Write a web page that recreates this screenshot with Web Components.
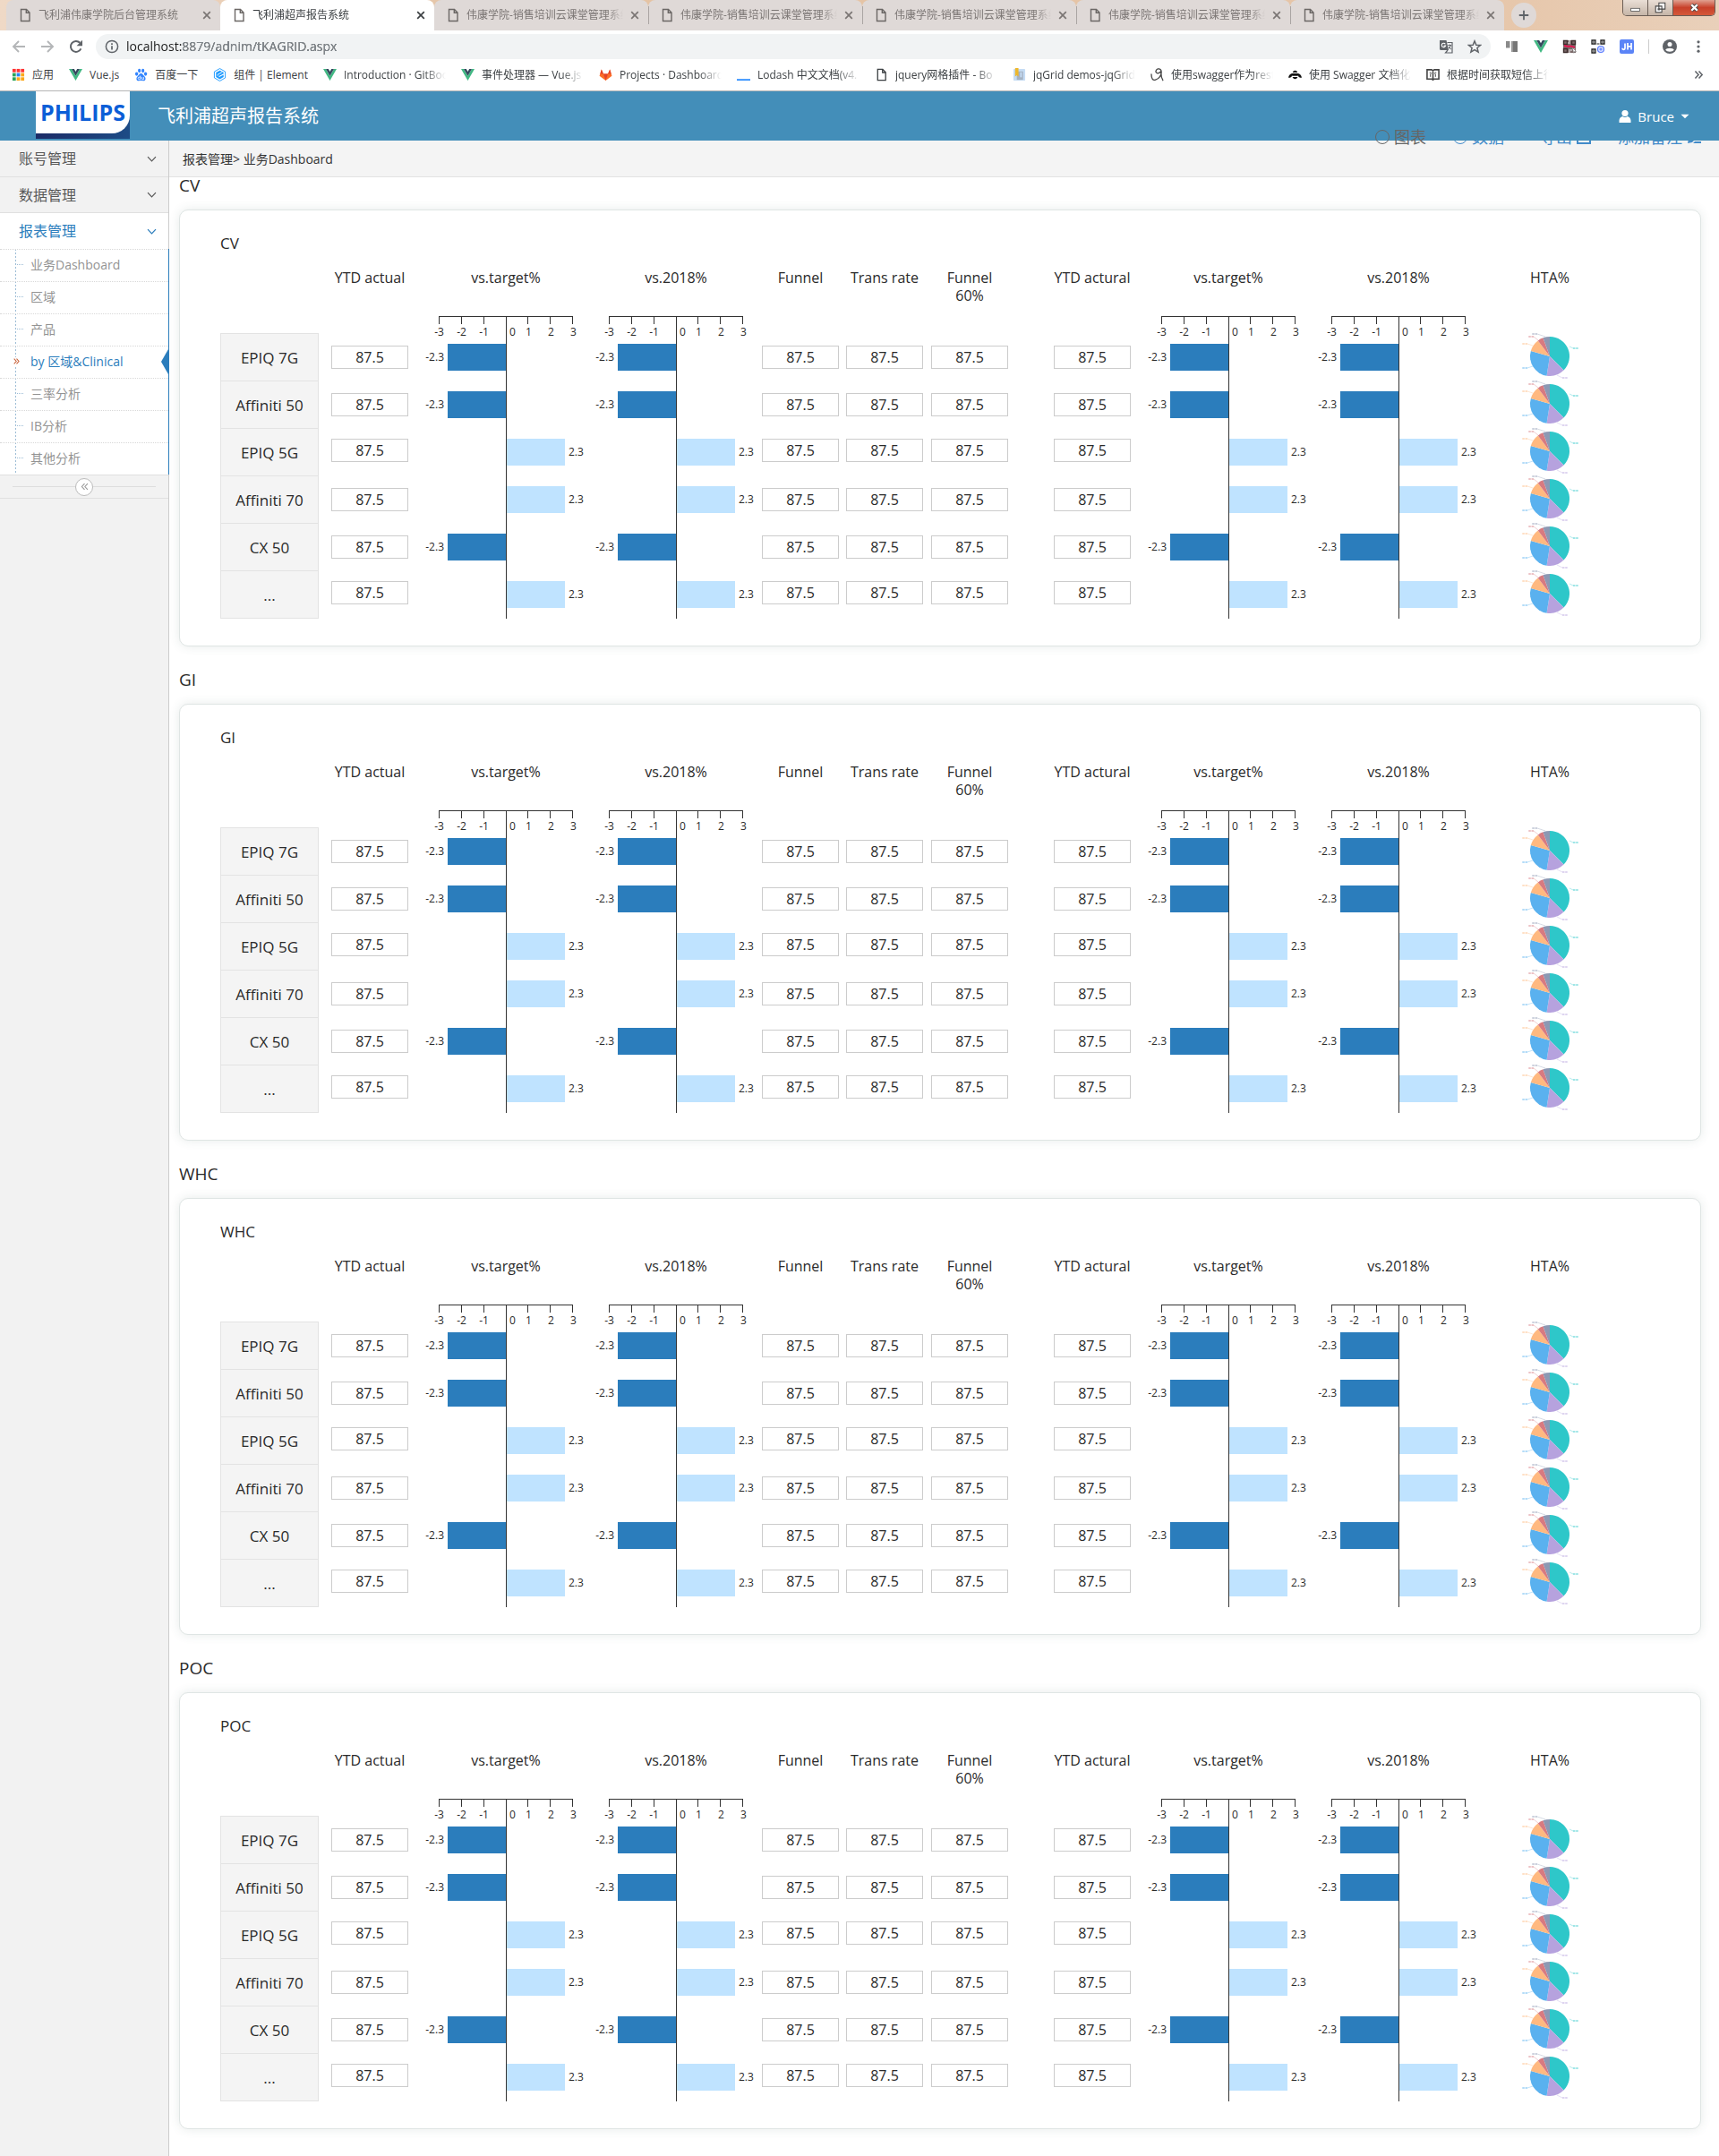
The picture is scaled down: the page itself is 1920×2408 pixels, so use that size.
<!DOCTYPE html>
<html lang="zh-CN">
<head>
<meta charset="utf-8">
<title>飞利浦超声报告系统</title>
<style>
html,body{margin:0;min-height:100%}
body{font-family:"Open Sans","Noto Sans CJK SC",sans-serif;color:#2a2a2a;background:#fff;min-height:100vh;display:flex;flex-direction:column}
app-shell{flex:1}
</style>
</head>
<body>
<browser-chrome></browser-chrome>
<app-header></app-header>
<app-shell>
  <side-menu slot="side"></side-menu>
  <page-toolbar slot="main"></page-toolbar>
  <product-panel slot="main" name="CV"></product-panel>
  <product-panel slot="main" name="GI"></product-panel>
  <product-panel slot="main" name="WHC"></product-panel>
  <product-panel slot="main" name="POC"></product-panel>
</app-shell>
<script>
const define = (tag, render) => customElements.define(tag, class extends HTMLElement {
  connectedCallback() {
    if (this.shadowRoot) return;
    const t = document.createElement('template');
    t.innerHTML = render(this);
    this.attachShadow({mode: 'open'}).append(t.content.cloneNode(true));
  }
});

/* ---------- icons ---------- */
const vue = '<path d="M0 1h3.2L8 9.4 12.8 1H16L8 15z" fill="#41b883"/><path d="M3.2 1h3L8 4.2 9.8 1h3L8 9.4z" fill="#35495e"/>';
const finder = (x, y) => `<path d="M${x} ${y}h4v4h-4z" fill="none" stroke="#222" stroke-width="1.3"/><path d="M${x+1.3} ${y+1.3}h1.4v1.4h-1.4z" fill="#222"/>`;
const ICONS = {
  page: '<path d="M3.5 1.5h6l3.5 3.5v9.5h-9.5z M9.3 1.7v3.6h3.5" fill="none" stroke="currentColor" stroke-width="1.4"/>',
  close: '<path d="M4.2 4.2l7.6 7.6M11.8 4.2l-7.6 7.6" fill="none" stroke="currentColor" stroke-width="1.7"/>',
  plus: '<path d="M8 1v14M1 8h14" fill="none" stroke="#5f6368" stroke-width="2.4"/>',
  back: '<path d="M15 8H2.5M8 2L2 8l6 6" fill="none" stroke="currentColor" stroke-width="1.9"/>',
  forward: '<path d="M1 8h12.500M8 2l6 6-6 6" fill="none" stroke="currentColor" stroke-width="1.9"/>',
  reload: '<path d="M13.4 10.400A6 6 0 1 1 12.300 3.800" fill="none" stroke="currentColor" stroke-width="2"/><path d="M15 .8v6.400H8.600z" fill="currentColor"/>',
  info: '<circle cx="8" cy="8" r="6.600" fill="none" stroke="#5f6368" stroke-width="1.500"/><path d="M8 7.200v4.200M8 4.300v1.600" stroke="#5f6368" stroke-width="1.700"/>',
  translate: '<path d="M1 1h7.500l2.500 11H2.500A1.500 1.500 0 0 1 1 10.500z" fill="#5f6368"/><path d="M9.500 3.500H15v11.500H7.500l2.500-3" fill="none" stroke="#5f6368" stroke-width="1.200"/><path d="M7.300 5.200A2.200 2.200 0 1 0 7.600 7H5.500" fill="none" stroke="#fff" stroke-width="1.100"/><path d="M10.300 6.500H14M12.200 5.500v1M13.300 6.700c-.4 2-1.400 3-2.600 4M11 8c.6 1.400 1.600 2.400 3 3" fill="none" stroke="#5f6368"/>',
  star: '<path d="M8 1.800l1.800 4.400 4.700.3-3.600 3 1.200 4.600L8 11.600l-4.100 2.500 1.200-4.600-3.600-3 4.700-.3z" fill="none" stroke="#5f6368" stroke-width="1.500"/>',
  panes: '<path d="M1 2h4.500v7.500H1z" fill="#8a8a8a"/><path d="M7 2h7v12H7z" fill="#777"/><path d="M7 2h2v12H7z" fill="#999"/>',
  vue,
  scan: '<path d="M1 1h14v14H1z" fill="#7d6a6a"/><path d="M1.500 1.500h4v4h-4zM10.500 1.500h4v4h-4zM1.500 10.500h4v4h-4z" fill="none" stroke="#3c2c2c" stroke-width="1.400"/><path d="M7 2h2M6 4h3M7 12h4M7 14h2M12 11h2" stroke="#eee"/><path d="M2 7l5 1 2-.6 5 1.400" fill="none" stroke="#e6124f" stroke-width="1.800"/><path d="M11 9l4.500 4.500-2 .1-.7 1.700z" fill="#fff" stroke="#777" stroke-width=".6"/>',
  qr: finder(1,1) + finder(11,1) + finder(1,11) + '<circle cx="11" cy="11" r="3.500" fill="#dbe2ff" stroke="#5b7cff" stroke-width="1.200"/><path d="M9.300 11h3.400M11 9.300v3.400" stroke="#5b7cff"/><path d="M6.500 5h3" stroke="#222"/>',
  jh: '<rect width="16" height="16" rx="2" fill="#5b84f7"/><path d="M6 4.500v5.300a1.500 1.500 0 0 1-3 0M9 4v7.500M13 4v7.500M9 7.800h4" fill="none" stroke="#fff" stroke-width="1.700"/>',
  avatar: '<circle cx="8" cy="8" r="8" fill="#5f6368"/><circle cx="8" cy="5.600" r="2.500" fill="#fff"/><path d="M3.200 11.800C4 8.900 12 8.900 12.800 11.800 11 14.300 5 14.300 3.200 11.800z" fill="#fff"/>',
  dots: '<circle cx="8" cy="2.800" r="1.600" fill="#5f6368"/><circle cx="8" cy="8" r="1.600" fill="#5f6368"/><circle cx="8" cy="13.200" r="1.600" fill="#5f6368"/>',
  apps: ['#f33','#f33','#f33','#2aa45a','#2a84f0','#fba81a','#2aa45a','#fba81a','#fba81a'].map((c,i)=>`<rect x="${1+(i%3)*5}" y="${1+Math.floor(i/3)*5}" width="4" height="4" fill="${c}"/>`).join(''),
  baidu: '<g fill="#3385ff"><ellipse cx="2.800" cy="7" rx="1.800" ry="2.300"/><ellipse cx="6" cy="3.200" rx="1.700" ry="2.300"/><ellipse cx="10.300" cy="3.200" rx="1.700" ry="2.300"/><ellipse cx="13.400" cy="7" rx="1.800" ry="2.300"/><path d="M8 6.400c2 0 2.600 2 4.300 3.600 2.300 2.400.7 5.600-1.800 5.200-1.700-.2-3.300-.2-5 0C3 15.600 1.400 12.400 3.700 10 5.400 8.400 6 6.400 8 6.400z"/></g><path d="M7.200 9.200v4.300H5.800a1.300 1.300 0 0 1 0-2.600h1.400M8.900 10.800v1.800q0 .9 1 .9h1.200v-2.700" fill="none" stroke="#fff" stroke-width=".9"/>',
  element: '<path d="M8 .6l6.500 3.700v7.400L8 15.400l-6.500-3.700V4.300z" fill="#fff" stroke="#1f9bff" stroke-width="1"/><path d="M8 2.800l4.500 2.500v1.300L7 9.700v1.200l5.500-3v2.700L8 13.200l-4.500-2.600V5.300z" fill="#1f9bff"/><path d="M5.500 9.200V7.800L10.500 5" fill="none" stroke="#fff"/>',
  gitlab: '<path d="M8 15L.6 9.300 3 1.500 5.300 7h5.400L13 1.500l2.400 7.800z" fill="#fc6d26"/><path d="M5.300 7h5.400L8 15z" fill="#e24329"/><path d="M3 1.500L5.300 7H1.400zM13 1.500L10.700 7h3.900z" fill="#e24329"/>',
  lodash: '<path d="M0 13h16v2H0z" fill="#3492ff"/>',
  book: '<rect x="1" y="1" width="14" height="14" rx="1" fill="#c5dcf4"/><path d="M5 4h7.500v10H5z" fill="#a5b2c2"/><path d="M9 5h2v6H9z" fill="#c5dcf4"/><path d="M3 0h4v10L5 8.500 3 10z" fill="#edb72c"/>',
  ribbon: '<path d="M1 7c0 6 2 8 5 7 4-1 7-5 7-9 0-3-2-4.500-4-4S5.500 4 7 5.500 11 6 12.500 4M12.500 5c0 4 .5 7 2.500 10" fill="none" stroke="#444" stroke-width="1.400"/>',
  bee: '<ellipse cx="8" cy="8" rx="3.300" ry="5" fill="#111"/><path d="M5.500 6.500c-3 0-5 2-5.500 5 2 .3 4.500-1 5.500-3zM10.500 6.500c3 0 5 2 5.500 5-2 .3-4.500-1-5.500-3z" fill="#111"/><path d="M4 5.800h8M4 10h8" stroke="#fff" stroke-width="1.100"/>',
  reader: '<path d="M1 2h5.500L8 3.200 9.500 2H15v11H9.500L8 14.200 6.500 13H1zM8 3v11" fill="none" stroke="#444" stroke-width="1.700"/><path d="M4 5.500c2-1 2 1 1 2v3M12 5.500c-2-1-2 1-1 2v3" fill="none" stroke="#444"/>',
  user: '<circle cx="8" cy="4.500" r="3.600" fill="currentColor"/><path d="M1.500 15v-2.500C1.500 9.700 4 8.400 5.200 8c1.600 1.300 4 1.300 5.600 0 1.200.4 3.700 1.700 3.700 4.500V15z" fill="currentColor"/>',
  caret: '<path d="M2 5h12l-6 6z" fill="currentColor"/>',
  down: '<path d="M2.500 5L8 11l5.500-6" fill="none" stroke="currentColor" stroke-width="1.500"/>',
  left2: '<path d="M8 3L3.500 8 8 13M13 3L8.500 8l4.500 5" fill="none" stroke="currentColor" stroke-width="1.600"/>',
  right2: '<path d="M3 3l4.500 5L3 13M8 3l4.500 5L8 13" fill="none" stroke="currentColor" stroke-width="1.900"/>',
  exporter: '<path d="M6 2H1v13h14v-4" fill="none" stroke="currentColor" stroke-width="2"/><path d="M5 11c0-5 3-6 6-6V2l5 4.500L11 11V8c-3 0-5 1-6 3z" fill="currentColor"/>',
  note: '<path d="M1 15l1-5 8-8 4 4-8 8zM7 15l2-2h7v2z" fill="currentColor"/>',
  min: '<rect x="2" y="9" width="12" height="4" fill="#fff" stroke="#555" stroke-width="1"/>',
  max: '<path d="M6 1.500h8.500V10H6z M1.500 6H10v8.500H1.500z" fill="#fff" stroke="#444" stroke-width="1.300"/><path d="M4.300 8.800h3v3h-3z" fill="#555"/>',
  quit: '<path d="M4 4l8 8M12 4l-8 8" stroke="#444" stroke-width="5"/><path d="M4 4l8 8M12 4l-8 8" stroke="#fff" stroke-width="3"/>'
};
define('ui-icon', el => `<style>:host{display:inline-flex;width:var(--s,16px);height:var(--s,16px);flex:none}svg{width:100%;height:100%;display:block}</style><svg viewBox="0 0 16 16" aria-hidden="true">${ICONS[el.getAttribute('name')]}</svg>`);
const icon = (n, c='') => `<ui-icon name="${n}" class="${c}"></ui-icon>`;

/* ---------- browser window ---------- */
define('browser-tab', el => `<style>
:host{display:flex;align-items:center;flex:0 1 239px;min-width:0;height:34px;box-sizing:border-box;padding:0 7px 0 13px;background:#dfd9d7;border-radius:8px 8px 0 0;color:#7b7674;font-size:12px;position:relative}
:host([active]){background:#fff;color:#3c4043}
:host([line])::before{content:"";position:absolute;left:0;top:7px;height:20px;width:1px;background:#aaa5a3}
.t{flex:1;margin:0 5px 0 7px;white-space:nowrap;overflow:hidden;line-height:20px;-webkit-mask-image:linear-gradient(90deg,#000 90%,transparent)}
button{border:0;background:none;padding:0;color:inherit;display:flex}
.p{color:#6b6765}
</style>${icon('page','p')}<span class="t"><slot></slot></span><button aria-label="关闭标签页">${icon('close')}</button>`);

define('book-mark', el => `<style>
:host{display:block;min-width:0}
a{display:flex;align-items:center;gap:8px;color:#3c4043;text-decoration:none;font-size:12px;line-height:20px}
span{white-space:nowrap;overflow:hidden}
:host([fade]) span{width:114px;-webkit-mask-image:linear-gradient(90deg,#000 78%,transparent)}
ui-icon{--s:15px}
</style><a href="#">${icon(el.getAttribute('icon'))}<span><slot></slot></span></a>`);

define('browser-chrome', () => `<style>
:host{display:block;background:#fff;border-bottom:1px solid #b5b5b5}
.strip{height:34px;display:flex;align-items:flex-start;padding-left:7px;background:linear-gradient(90deg,#efd9c6,#e4c3a4 30%,#e6c5a8 85%,#e9d0ba)}
.new{width:28px;height:28px;margin:3px 0 0 8px;border:0;padding:8px;border-radius:50%;background:#dfd9d7;display:flex;--s:12px}
.win{margin-left:auto;margin-right:4px;display:flex;height:18px;border:1px solid #6a5d55;border-top:0;border-radius:0 0 5px 5px;overflow:hidden;box-sizing:border-box}
.win button{border:0;border-right:1px solid #6a5d55;width:28px;padding:0;display:flex;align-items:center;justify-content:center;background:linear-gradient(#eadfd6,#c5b5a8);--s:13px}
.win button:last-child{width:46px;border:0;background:linear-gradient(#e0a090,#c8402a 50%,#d4593a)}
.bar{height:32px;box-sizing:border-box;display:flex;align-items:center;padding:4px 15px 0 13px}
.bar>button{border:0;background:none;padding:0;display:flex;margin-right:16px;color:#b4b6b8}
.bar>button.on{color:#5f6368}
.bar>button:last-child{margin-right:0}
.url{flex:1;height:28px;border-radius:14px;background:#f1f3f4;display:flex;align-items:center;padding:0 10px;margin-right:16px;margin-left:-2px}
.url button{border:0;background:none;padding:0;display:flex;margin-left:16px}
label{flex:1;display:flex;margin-left:8px;position:relative;background:#f1f3f4;isolation:isolate}
label::after{content:"";position:absolute;top:0;bottom:0;right:0;left:62px;background:#80868b;mix-blend-mode:lighten;pointer-events:none}
input{flex:1;border:0;outline:0;padding:0;height:22px;font:14px/22px "Open Sans","Noto Sans CJK SC",sans-serif;background:transparent;color:#222}
.sep{width:1px;height:16px;background:#ccc;margin-right:15px}
.marks{height:35px;display:flex;align-items:center;gap:17px;padding:0 16px 0 13px}
.more{margin-left:auto;--s:13px;border:0;background:none;padding:0;color:#5f6368;display:flex}
</style>
<div class="strip">
<browser-tab>飞利浦伟康学院后台管理系统</browser-tab><browser-tab active>飞利浦超声报告系统</browser-tab>
<browser-tab>伟康学院-销售培训云课堂管理系统</browser-tab>${'<browser-tab line>伟康学院-销售培训云课堂管理系统</browser-tab>'.repeat(4)}
<button class="new" aria-label="新标签页">${icon('plus')}</button>
<div class="win"><button aria-label="最小化">${icon('min')}</button><button aria-label="还原">${icon('max')}</button><button aria-label="关闭">${icon('quit')}</button></div>
</div>
<div class="bar">
<button aria-label="后退">${icon('back')}</button><button aria-label="前进">${icon('forward')}</button><button class="on" aria-label="刷新">${icon('reload')}</button>
<div class="url">${icon('info')}<label><input aria-label="地址" value="localhost:8879/adnim/tKAGRID.aspx"></label><button aria-label="翻译">${icon('translate')}</button><button aria-label="收藏">${icon('star')}</button></div>
${['panes','vue','scan','qr','jh'].map(n=>`<button aria-label="${n}">${icon(n)}</button>`).join('')}
<span class="sep"></span><button aria-label="用户">${icon('avatar')}</button><button aria-label="菜单">${icon('dots')}</button>
</div>
<div class="marks">
<book-mark icon="apps">应用</book-mark><book-mark icon="vue">Vue.js</book-mark><book-mark icon="baidu">百度一下</book-mark><book-mark icon="element">组件 | Element</book-mark>
<book-mark icon="vue" fade>Introduction · GitBook</book-mark><book-mark icon="vue" fade>事件处理器 — Vue.js</book-mark><book-mark icon="gitlab" fade>Projects · Dashboard</book-mark><book-mark icon="lodash" fade>Lodash 中文文档(v4.</book-mark><book-mark icon="page" fade>jquery网格插件 - Bo</book-mark><book-mark icon="book" fade>jqGrid demos-jqGrid</book-mark><book-mark icon="ribbon" fade>使用swagger作为rest</book-mark><book-mark icon="bee" fade>使用 Swagger 文档化</book-mark><book-mark icon="reader" fade>根据时间获取短信上行</book-mark>
<button class="more" aria-label="更多书签">${icon('right2')}</button>
</div>`);

/* ---------- application header ---------- */
define('philips-logo', () => `<style>
:host{display:block;width:105px;height:53px;background:linear-gradient(90deg,#1c2b66,#1d4c86)}
div{height:47px;background:#fff;border-radius:0 0 20px 0;display:flex;align-items:center;justify-content:center;font-size:25px;font-weight:700;color:#0b5ed7;line-height:47px}
</style><div>PHILIPS</div>`);

define('app-header', () => `<style>
:host{display:flex;align-items:center;height:55px;background:#438eb9;color:#fff;padding:0 32px 0 40px;position:relative;z-index:2}
philips-logo{align-self:flex-start}
h1{margin:0 auto 0 31px;font-size:20px;font-weight:400;line-height:30px}
button{border:0;background:none;color:inherit;font:15px/24px "Open Sans","Noto Sans CJK SC",sans-serif;padding:0;display:flex;align-items:center;gap:6px}
.c{--s:12px}
</style><philips-logo></philips-logo><h1>飞利浦超声报告系统</h1><button>${icon('user')}Bruce ${icon('caret','c')}</button>`);

/* ---------- layout ---------- */
define('app-shell', () => `<style>
:host{display:flex;align-items:stretch}
aside{width:188px;flex:none;background:#f2f2f2;border-right:1px solid #ccc}
main{flex:1;min-width:0;padding-bottom:30px}
</style><aside><slot name="side"></slot></aside><main><slot name="main"></slot></main>`);

define('side-menu', () => `<style>
:host{display:block}
ul{list-style:none;margin:0;padding:0}
.top{display:flex;align-items:center;justify-content:space-between;width:100%;height:40px;box-sizing:border-box;border:0;border-bottom:1px solid #e0e0e0;background:#f2f2f2;padding:0 12px 0 21px;color:#585858;font:16px/24px "Open Sans","Noto Sans CJK SC",sans-serif;--s:13px}
.top.open{background:#fff;color:#2b7dbc;border:0}
li:first-child .top{height:41px}
.sub{background:#fff;border-right:1px solid #2b7dbc;margin-right:-1px;background-image:linear-gradient(#9dbdd6 50%,transparent 50%);background-size:1px 4px;background-repeat:repeat-y;background-position:17px 0}
.sub a{display:flex;align-items:center;height:36px;box-sizing:border-box;border-top:1px dotted #d8d8d8;padding-bottom:2px;color:#939393;text-decoration:none;font-size:14px;line-height:20px;position:relative}
.sub a::before{content:"";width:7px;margin:0 8px 0 19px;border-top:1px dotted #9dbdd6}
.sub a.on{color:#2b7dbc}
.sub a.on::before{display:none}
.on ui-icon{--s:9px;color:#c86139;background:#fff;margin:0 11px 0 14px}
.on::after{content:"";position:absolute;right:0;top:3px;border:14px solid transparent;border-right:8px solid #2b7dbc;border-left:0}
.fold{display:flex;align-items:center;padding:0 14px;height:27px;border-top:1px solid #e0e0e0;border-bottom:1px solid #e0e0e0;box-sizing:border-box}
.fold::before,.fold::after{content:"";flex:1;height:1px;background:#ddd}
.fold button{width:20px;height:20px;border:1px solid #bbb;border-radius:50%;background:#fff;color:#999;padding:0;display:flex;align-items:center;justify-content:center;--s:11px}
</style>
<ul>
<li><button class="top">账号管理${icon('down')}</button></li>
<li><button class="top">数据管理${icon('down')}</button></li>
<li><button class="top open">报表管理${icon('down')}</button>
<ul class="sub">${['业务Dashboard','区域','产品','by 区域&amp;Clinical','三率分析','IB分析','其他分析'].map((t,i)=>`<li><a href="#" class="${i===3?'on':''}">${i===3?icon('right2'):''}${t}</a></li>`).join('')}</ul></li>
</ul>
<div class="fold"><button aria-label="收起菜单">${icon('left2')}</button></div>`);

define('page-toolbar', () => `<style>
:host{display:flex;align-items:center;height:41px;box-sizing:border-box;background:#f4f4f4;border-bottom:1px solid #e2e2e2;padding-left:15px;font-size:14px;color:#333;position:relative}
.tools{position:absolute;right:20px;top:-16px;display:flex;align-items:center;font-size:18px;line-height:24px;color:#428bca}
.tools>*{display:flex;align-items:center;gap:5px;position:relative;z-index:1}
.tools .front{z-index:3;color:#666}
input{appearance:none;box-sizing:border-box;width:16px;height:16px;margin:0;border:1px solid currentColor;border-radius:50%;color:inherit}
input:checked{background:radial-gradient(currentColor 3px,transparent 4px)}
button{border:0;background:none;color:inherit;font:inherit;padding:0}
.g{margin-left:30px}
.w{margin-left:40px}
</style><nav>报表管理&gt; 业务Dashboard</nav>
<div class="tools"><label class="front"><input type="radio" name="view">图表</label><label class="g"><input type="radio" name="view" checked>数据</label><button class="w">导出${icon('exporter')}</button><button class="g">添加备注${icon('note')}</button></div>`);

/* ---------- chart parts ---------- */
define('axis-scale', () => `<style>
:host{display:block;height:19px;font-size:12px;line-height:16px;font-weight:400;overflow:visible}
svg{display:block;width:190px;height:9px}
div{display:grid;grid-template-columns:repeat(7,25px);padding-left:8px;margin-top:1px;text-align:center}
.z{padding-left:14px}
</style><svg viewBox="0 0 190 9" aria-hidden="true"><path d="M20 .5h150M20.500 0v9M45.500 0v9M70.500 0v9M95.500 0v9M119.500 0v9M144.500 0v9M169.500 0v9" fill="none" stroke="#333"/></svg>
<div>${[-3,-2,-1,0,1,2,3].map(n=>`<span${n?'':' class="z"'}>${n}</span>`).join('')}</div>`);

define('value-bar', el => {
  const v = +el.getAttribute('value');
  return `<style>
:host{display:flex;align-items:center;height:30px;gap:4px;font-size:12px;line-height:16px;${v<0?'flex-direction:row-reverse;width:95px':'margin-left:96px'}}
i{height:30px;width:65px;background:${v<0?'#2b7dbc':'#bfe3ff'}}
</style><i></i><span>${v}</span>`;
});

define('share-pie', () => {
  const cx = 33, cy = 26, r = 22, rad = Math.PI / 180;
  const p = a => `${(cx + r*Math.sin(a*rad)).toFixed(2)} ${(cy - r*Math.cos(a*rad)).toFixed(2)}`;
  const parts = [[0,135,'#2ec7c9'],[135,189,'#b6a2de'],[189,286,'#5ab1ef'],[286,323,'#ffb980'],[323,340,'#d87a80'],[340,360,'#8d98b3']];
  const tags = [[22,-11,26,-9,32,'#2ec7c9'],[8,21,14,24,20,'#b6a2de'],[-19,11,-25,13,-31,'#5ab1ef'],[-19,-12,-25,-14,-31,'#ffb980'],[-13,-18,-18,-22,-24,'#d87a80'],[-5,-22,-14,-25,-20,'#8d98b3']];
  return `<style>:host{display:block}svg{display:block;margin:auto;width:66px;height:52px}</style><svg viewBox="0 0 66 52" role="img" aria-label="HTA">
${parts.map(([a,b,c])=>`<path d="M${cx} ${cy}L${p(a)}A${r} ${r} 0 0 1 ${p(b)}z" fill="${c}"/>`).join('')}
${tags.map(([x,y,x2,y2,x3,c])=>`<path d="M${cx+x} ${cy+y}L${cx+x2} ${cy+y2}" stroke="${c}" stroke-width=".6" opacity=".6"/><path d="M${cx+x2} ${cy+y2}H${cx+x3}" stroke="${c}" stroke-width="1.600" stroke-dasharray="2.500 .7" opacity=".6"/>`).join('')}</svg>`;
});

define('product-panel', el => {
  const name = el.getAttribute('name');
  const rows = [['EPIQ 7G',-2.3],['Affiniti 50',-2.3],['EPIQ 5G',2.3],['Affiniti 70',2.3],['CX 50',-2.3],['...',2.3]];
  const val = '<td class="v"><span>87.5</span></td>', bar = v => `<td class="b"><value-bar value="${v}"></value-bar></td>`;
  const axis = '<td class="b"><axis-scale></axis-scale></td>';
  return `<style>
:host{display:block;padding:0 20px 0 11px}
:host(:not(:last-child)){margin-bottom:28px}
h2{margin:0 0 18px;font-size:19px;line-height:18px;font-weight:500}
section{border:1px solid #dfe5e4;border-radius:10px;box-shadow:0 0 12px rgba(60,90,80,.12);padding:25px 45px 30px;background:#fff}
h3{margin:0;font-size:17px;line-height:24px;font-weight:500}
table{table-layout:fixed;width:1559px;border-collapse:separate;border-spacing:0;font-size:16px;line-height:20px}
td,th{padding:0;vertical-align:top}
thead th{height:69px;box-sizing:border-box;padding-top:16px;font-weight:500}
thead tr+tr td{height:19px}
tbody td,tbody th{height:53px;box-sizing:border-box}
tbody th{background:#f4f4f4;border:1px solid #e3e3e3;border-bottom:0;font-weight:400;vertical-align:middle;padding-top:2px;font-size:17px}
tbody tr:last-child>*{height:54px}
tbody tr:last-child th{border-bottom:1px solid #e3e3e3}
.v{padding-top:14px}
tr:nth-child(3n) .v{padding-top:12px}
.v span{display:block;box-sizing:border-box;width:86px;height:26px;line-height:24px;margin:auto;border:1px solid #ccc;text-align:center;background:#fff}
.b{background:linear-gradient(#333,#333) 95px 0/1px 100% no-repeat}
tbody .b{padding-top:12px}
</style>
<h2>${name}</h2>
<section><h3>${name}</h3>
<table>
<colgroup>${[110,114,190,190,88,100,90,35,114,190,190,148].map(w=>`<col style="width:${w}px">`).join('')}</colgroup>
<thead><tr><td></td><th>YTD actual</th><th>vs.target%</th><th>vs.2018%</th><th>Funnel</th><th>Trans rate</th><th>Funnel<br>60%</th><td></td><th>YTD actural</th><th>vs.target%</th><th>vs.2018%</th><th>HTA%</th></tr>
<tr><td></td><td></td>${axis}${axis}<td></td><td></td><td></td><td></td><td></td>${axis}${axis}<td></td></tr></thead>
<tbody>${rows.map(([n,v])=>`<tr><th scope="row">${n}</th>${val}${bar(v)}${bar(v)}${val}${val}${val}<td></td>${val}${bar(v)}${bar(v)}<td><share-pie></share-pie></td></tr>`).join('')}</tbody>
</table></section>`;
});
</script>
</body>
</html>
